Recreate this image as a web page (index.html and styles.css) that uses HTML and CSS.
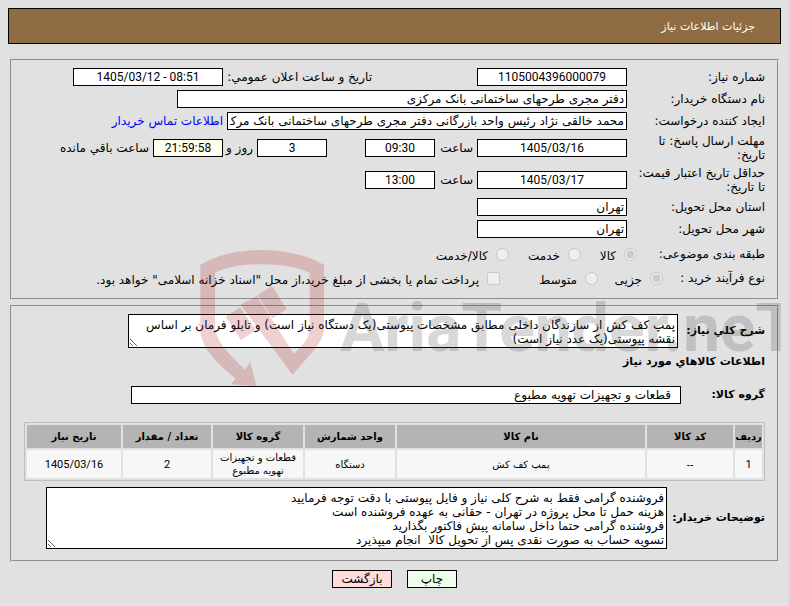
FILE: index.html
```html
<!DOCTYPE html>
<html lang="fa" dir="rtl">
<head>
<meta charset="utf-8">
<title>جزئیات اطلاعات نیاز</title>
<link rel="stylesheet" href="styles.css">
</head>
<body>
<header class="titlebar">جزئیات اطلاعات نیاز</header>

<form>
<fieldset class="panel details">
  <div class="row">
    <label class="name" for="num">شماره نیاز:</label>
    <input class="field mid center" id="num" value="1105004396000079" readonly>
    <label class="announce" for="pub">تاریخ و ساعت اعلان عمومي:</label>
    <input class="field mid center" id="pub" dir="ltr" value="1405/03/12 - 08:51" readonly>
  </div>
  <div class="row">
    <label class="name" for="org">نام دستگاه خریدار:</label>
    <input class="field wide" id="org" value="دفتر مجری طرحهای ساختمانی بانک مرکزی" readonly>
  </div>
  <div class="row">
    <label class="name" for="creator">ایجاد کننده درخواست:</label>
    <input class="field long" id="creator" value="محمد خالقی نژاد رئیس واحد بازرگانی دفتر مجری طرحهای ساختمانی بانک مرکزی" readonly>
    <a href="#contact">اطلاعات تماس خریدار</a>
  </div>
  <div class="row tall">
    <label class="name" for="d1">مهلت ارسال پاسخ: تا تاریخ:</label>
    <input class="field mid center" id="d1" value="1405/03/16" readonly>
    <label class="unit" for="t1">ساعت</label>
    <input class="field small center" id="t1" value="09:30" readonly>
    <input class="field small center days" id="days" value="3" readonly>
    <label class="and" for="days">روز و</label>
    <input class="field small center remain" id="left" value="21:59:58" readonly>
    <label for="left">ساعت باقي مانده</label>
  </div>
  <div class="row tall">
    <label class="name" for="d2">حداقل تاریخ اعتبار قیمت: تا تاریخ:</label>
    <input class="field mid center" id="d2" value="1405/03/17" readonly>
    <label class="unit" for="t2">ساعت</label>
    <input class="field small center" id="t2" value="13:00" readonly>
  </div>
  <div class="row">
    <label class="name" for="prov">استان محل تحویل:</label>
    <input class="field mid" id="prov" value="تهران" readonly>
  </div>
  <div class="row">
    <label class="name" for="city">شهر محل تحویل:</label>
    <input class="field mid" id="city" value="تهران" readonly>
  </div>
  <div class="row options subject">
    <span class="caption">طبقه بندی موضوعی:</span>
    <label class="choice goods"><input type="radio" name="kind" checked disabled><span>کالا</span></label>
    <label class="choice service"><input type="radio" name="kind" disabled><span>خدمت</span></label>
    <label class="choice"><input type="radio" name="kind" disabled><span>کالا/خدمت</span></label>
  </div>
  <div class="row options process">
    <span class="caption">نوع فرآیند خرید :</span>
    <label class="choice minor"><input type="radio" name="size" checked disabled><span>جزیی</span></label>
    <label class="choice medium"><input type="radio" name="size" disabled><span>متوسط</span></label>
    <label class="choice pay"><input type="checkbox" disabled><span>پرداخت تمام یا بخشی از مبلغ خرید،از محل "اسناد خزانه اسلامی" خواهد بود.</span></label>
  </div>
</fieldset>

<fieldset class="panel goods-panel">
  <div class="row">
    <label class="strong about" for="desc">شرح کلي نیاز:</label>
    <textarea class="area desc" id="desc" readonly>پمپ کف کش از سازندگان داخلی مطابق مشخصات پیوستی(یک دستگاه نیاز است) و تابلو فرمان بر اساس نقشه پیوستی(یک عدد نیاز است)</textarea>
  </div>
  <h2>اطلاعات کالاهاي مورد نیاز</h2>
  <div class="row">
    <label class="strong group" for="grp">گروه کالا:</label>
    <input class="field full" id="grp" value="قطعات و تجهیزات تهویه مطبوع" readonly>
  </div>
  <table>
    <colgroup><col class="c1"><col class="c2"><col><col class="c4"><col class="c4"><col class="c6"><col class="c7"></colgroup>
    <thead>
      <tr><th>ردیف</th><th>کد کالا</th><th>نام کالا</th><th>واحد شمارش</th><th>گروه کالا</th><th>تعداد / مقدار</th><th>تاریخ نیاز</th></tr>
    </thead>
    <tbody>
      <tr><td class="num">1</td><td>--</td><td>پمپ کف کش</td><td>دستگاه</td><td>قطعات و تجهیزات تهویه مطبوع</td><td class="num">2</td><td class="num">1405/03/16</td></tr>
    </tbody>
  </table>
  <div class="row">
    <label class="strong remarks" for="notes">توضیحات خریدار:</label>
    <textarea class="area notes" id="notes" readonly>فروشنده گرامی فقط به شرح کلی نیاز و فایل پیوستی با دقت توجه فرمایید
هزینه حمل تا محل پروژه در تهران - حقانی به عهده فروشنده است
فروشنده گرامی حتما داخل سامانه پیش فاکتور بگذارید
تسویه حساب به صورت نقدی پس از تحویل کالا  انجام میپذیرد</textarea>
  </div>
</fieldset>

<div class="actions">
  <button type="button" class="print">چاپ</button>
  <button type="button" class="back">بازگشت</button>
</div>
</form>

<div class="watermark" dir="ltr" aria-hidden="true">
  <svg viewBox="0 0 450 450" width="150" height="150">
    <path d="M31 75C130 15 300 15 402 75V265C402 305 366 335 308 405L152 194L201 168L312 343C340 312 359 295 359 265V98C290 64 145 64 75 98V262C77 305 120 345 165 389L181 365L199 438L122 433L137 416C60 355 31 310 31 265Z"/>
    <path d="M107 230L150 202L197 271L153 300ZM203 165L246 138L290 207L247 235Z"/>
  </svg>
  <span>AriaTender.neT</span>
</div>
</body>
</html>
```
FILE: styles.css
```css
* { box-sizing: border-box; }

body {
  margin: 8px;
  position: relative;
  overflow: hidden;
  background: #e1e1e1;
  color: #000;
  font: 12px/14px "DejaVu Sans", sans-serif;
}

.titlebar {
  height: 36px;
  padding: 0 25px;
  border: 1px solid #000;
  background: #8f6c41;
  color: #fff;
  font-size: 11px;
  line-height: 36px;
}

.panel {
  min-width: 0;
  margin: 0 2px;
  border: 2px groove #e1e1e1;
}

.details {
  margin-top: 15px;
  padding: 7px 12px 8px;
}

.goods-panel {
  margin-top: 5px;
  padding: 7px 12px 7px;
}

.row {
  display: flex;
  align-items: center;
  gap: 4px;
  min-height: 18px;
  margin-bottom: 4px;
}

.row.tall {
  min-height: 28px;
}

.name {
  width: 134px;
  flex: none;
}

.tall .name {
  padding-left: 6px;
}

.field,
.area {
  margin: 0;
  border: 1px solid #000;
  background: #fff;
  color: #000;
  font: inherit;
  min-width: 0;
}

.field {
  height: 18px;
  padding: 1px 2px;
}

.center {
  text-align: center;
  font: 12px/14px Roboto, sans-serif;
}

.small { width: 70px; }
.mid { width: 150px; }
.long { width: 400px; }
.wide { width: 450px; }

.full {
  width: 550px;
  padding-right: 9px;
}

.announce {
  width: 145px;
  margin-right: 101px;
  white-space: nowrap;
}

.unit { width: 34px; }
.days { margin-right: 34px; }
.and { width: 26px; white-space: nowrap; }
.remain { background: #ffffec; }

a {
  color: #00f;
  text-decoration: none;
}

.options {
  gap: 0;
  height: 24px;
  margin-bottom: 0;
}

.subject .caption { width: 128px; }
.process .caption { width: 102px; }

.choice {
  display: flex;
  align-items: center;
  gap: 8px;
  white-space: nowrap;
}

.choice span { padding-top: 4px; }

.choice input {
  width: 13px;
  height: 13px;
  margin: 0;
}

.goods { width: 56px; }
.service { width: 72px; }
.minor { width: 65px; }
.medium { width: 98px; }

.strong,
h2 {
  flex: none;
  font-size: 11px;
  font-weight: bold;
  white-space: nowrap;
}

.group { width: 80px; }
.about { width: 83px; }
.remarks { width: 94px; }

.area {
  padding: 3px 2px 1px;
  overflow: hidden;
  resize: both;
}

.desc {
  width: 550px;
  height: 34px;
}

.notes {
  width: 621px;
  height: 62px;
}

h2 {
  margin: 7px 0 17px;
}

table {
  width: 100%;
  margin: 18px 0 6px;
  border: 1px solid #bebebe;
  border-spacing: 2px;
  table-layout: fixed;
  font-size: 10px;
  line-height: 13px;
}

th,
td {
  padding: 0;
  text-align: center;
}

th {
  height: 23px;
  background: #b4b4b4;
  white-space: nowrap;
}

td {
  height: 28px;
  background: #f7f7f7;
}

.num { font: 11px/13px Roboto, sans-serif; }

.c1 { width: 27px; }
.c2 { width: 86px; }
.c4 { width: 90px; }
.c6 { width: 88px; }
.c7 { width: 94px; }

.actions {
  display: flex;
  justify-content: center;
  gap: 15px;
  margin-top: 8px;
}

button {
  height: 18px;
  padding: 0;
  border: 1px solid #000;
  color: #000;
  font: inherit;
}

.print {
  width: 50px;
  background: #ebffeb;
}

.back {
  width: 60px;
  background: #ffdcdc;
}

.watermark {
  position: absolute;
  top: 232px;
  left: 182px;
  display: flex;
  align-items: flex-start;
  pointer-events: none;
  font: bold 66px/90px Roboto, "Liberation Sans", sans-serif;
  color: rgba(60, 60, 60, 0.2);
}

.watermark svg {
  flex: none;
  fill: rgba(175, 20, 25, 0.2);
}

.watermark span { padding-top: 44px; }
```
